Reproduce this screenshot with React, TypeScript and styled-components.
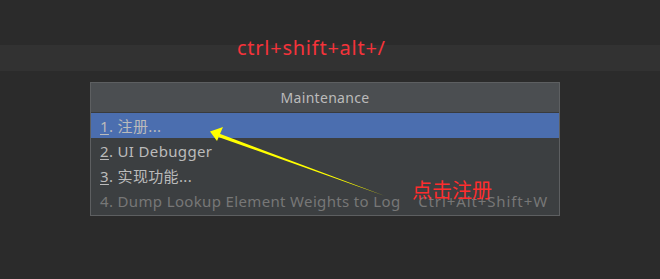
import * as React from 'react';
import styled, {createGlobalStyle} from 'styled-components';

const GlobalStyle = createGlobalStyle`
  html, body {
    margin: 0;
    padding: 0;
    background: #2b2b2b;
  }
  body {
    width: 660px;
    height: 279px;
    overflow: hidden;
    font-family: "Noto Sans", "Noto Sans CJK SC", sans-serif;
  }
`;

const Page = styled.div`
  position: relative;
  width: 660px;
  height: 279px;
  background: #2b2b2b;
  padding-top: 45px;
  box-sizing: border-box;
`;

const Band = styled.div`
  height: 26px;
  background: #323232;
  position: relative;
`;

const Caption = styled.div`
  position: absolute;
  left: 237px;
  top: -10px;
  color: #f5333a;
  font-size: 20px;
  letter-spacing: 0.75px;
  line-height: 26px;
  font-family: "Noto Sans", "Noto Sans CJK SC", sans-serif;
`;

const Popup = styled.div`
  margin: 11px 0 0 90px;
  width: 468px;
  border: 1px solid #5d5f61;
  background: #3c3f41;
  padding-bottom: 2px;
`;

const Header = styled.div`
  height: 29px;
  background: #4b4e51;
  border-bottom: 1px solid #393b3d;
  color: #bbbbbb;
  font-size: 14px;
  letter-spacing: 0.3px;
  display: flex;
  align-items: center;
  justify-content: center;
`;

const Row = styled.div<{$selected?: boolean; $disabled?: boolean}>`
  height: 25px;
  display: flex;
  align-items: center;
  justify-content: space-between;
  padding: 0 11px 0 9px;
  font-size: 15px;
  letter-spacing: 0.35px;
  background: ${p => (p.$selected ? '#4b6eaf' : 'transparent')};
  color: ${p => (p.$disabled ? '#777777' : '#bbbbbb')};
`;

const Mnemonic = styled.span`
  text-decoration: underline;
  text-underline-offset: 2px;
`;

const Shortcut = styled.span`
  color: #777777;
  letter-spacing: 0.9px;
`;

const Note = styled.div`
  position: absolute;
  left: 412px;
  top: 177px;
  color: #ff2d2d;
  font-size: 20px;
  line-height: 26px;
  font-family: "Noto Sans CJK SC", sans-serif;
`;

const Arrow = styled.svg`
  position: absolute;
  left: 0;
  top: 0;
  pointer-events: none;
`;

export default function App() {
    return (
        <Page>
            <GlobalStyle/>
            <Band>
                <Caption>ctrl+shift+alt+/</Caption>
            </Band>
            <Popup>
                <Header>Maintenance</Header>
                <Row $selected><span><Mnemonic>1</Mnemonic>. 注册...</span></Row>
                <Row><span><Mnemonic>2</Mnemonic>. UI Debugger</span></Row>
                <Row><span><Mnemonic>3</Mnemonic>. 实现功能...</span></Row>
                <Row $disabled>
                    <span>4. Dump Lookup Element Weights to Log</span>
                    <Shortcut>Ctrl+Alt+Shift+W</Shortcut>
                </Row>
            </Popup>
            <Note>点击注册</Note>
            <Arrow width="660" height="279" viewBox="0 0 660 279">
                <polygon points="219,133.5 385,196 219,137.2" fill="#ffff00"/>
                <polygon points="210,131.5 223,127 217,141" fill="#ffff00"/>
            </Arrow>
        </Page>
    );
}
